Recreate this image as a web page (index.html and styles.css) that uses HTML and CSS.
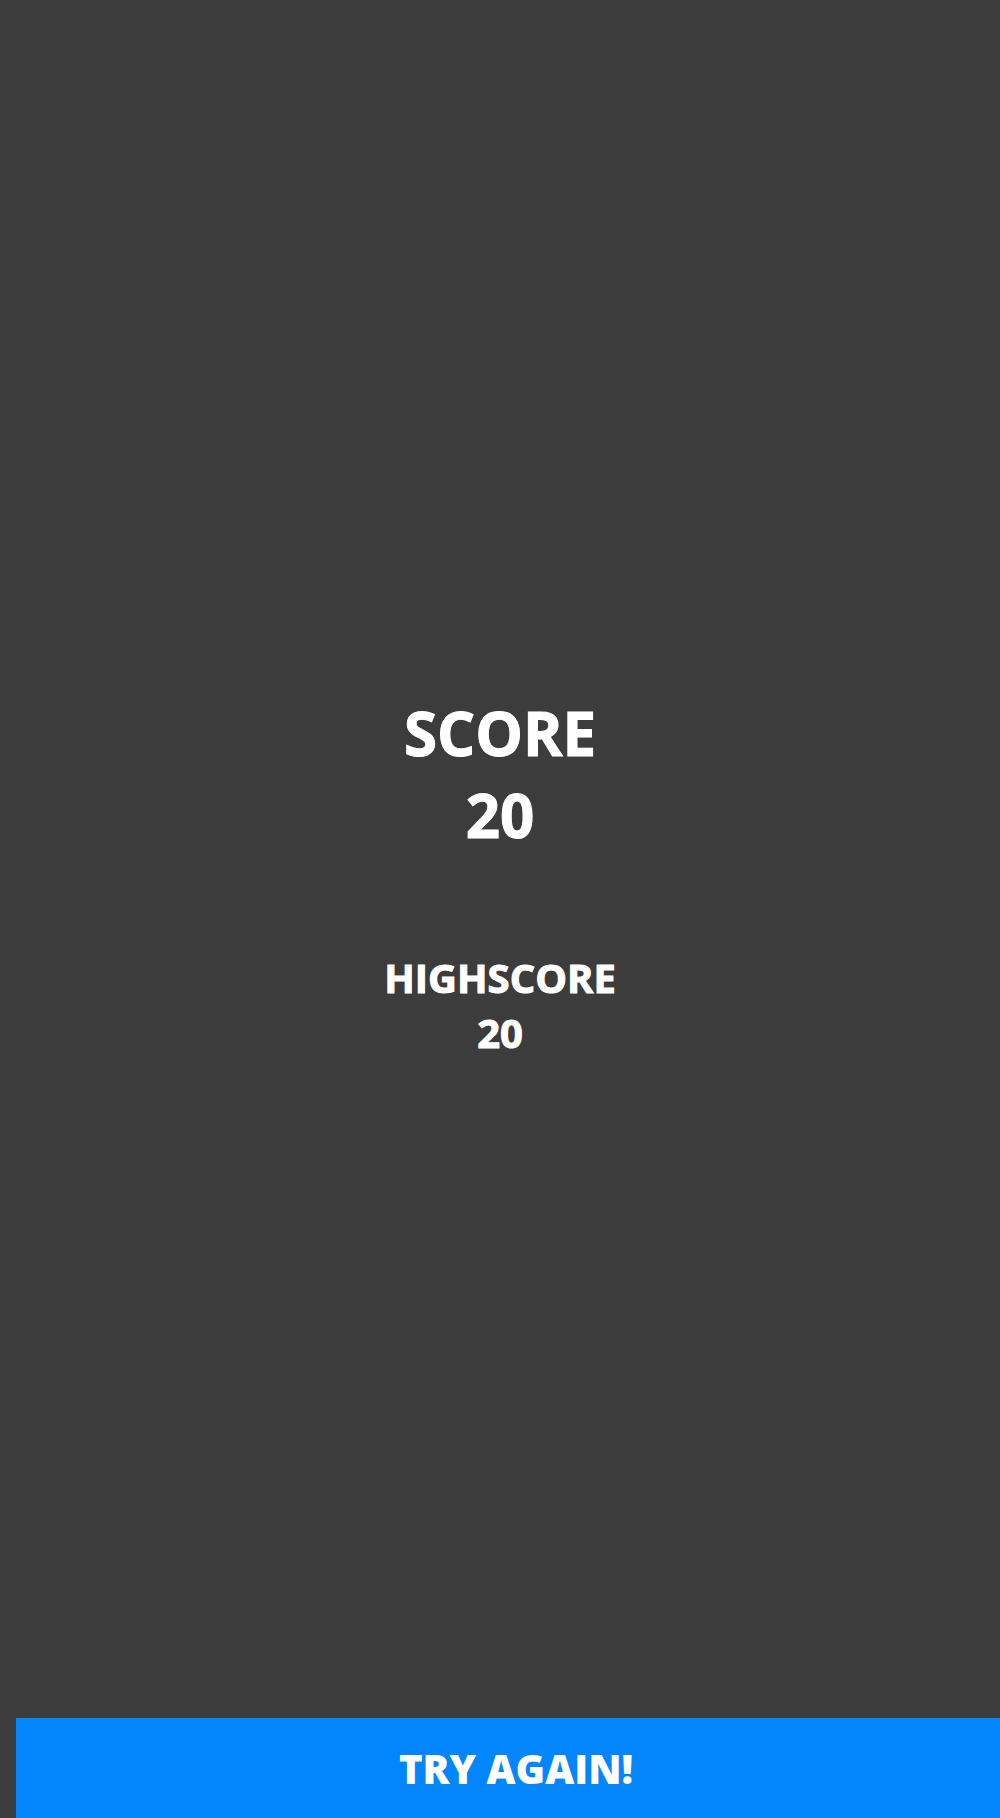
FILE: index.html
```
<!DOCTYPE html>
<html lang="en">
<head>
<meta charset="utf-8">
<meta name="viewport" content="width=device-width, initial-scale=1">
<title>Game over</title>
<link rel="stylesheet" href="styles.css">
</head>
<body>
<main class="results">
  <section class="score">
    <h1>SCORE</h1>
    <p>20</p>
  </section>
  <section class="highscore">
    <h2>HIGHSCORE</h2>
    <p>20</p>
  </section>
</main>
<button class="retry" type="button">TRY AGAIN!</button>
</body>
</html>
```

FILE: styles.css
```
* {
  box-sizing: border-box;
}

body {
  display: flex;
  flex-direction: column;
  min-height: 100vh;
  margin: 0;
  overflow-x: hidden;
  background: #3c3c3c;
  color: #fff;
  font-family: "Open Sans", sans-serif;
  font-weight: 700;
}

.results {
  display: flex;
  flex: 1;
  flex-direction: column;
  align-items: center;
  justify-content: center;
  gap: 94px;
  padding-top: 34px;
  text-align: center;
  -webkit-text-stroke: 1px currentColor;
}

h1,
h2,
p {
  margin: 0;
  font: inherit;
}

.score {
  font-size: 60px;
  line-height: 82px;
}

.highscore {
  font-size: 40px;
  line-height: 55px;
}

.retry {
  width: 100%;
  height: 100px;
  margin-left: 16px;
  padding: 0;
  border: 0;
  background: #0385fc;
  color: inherit;
  font-family: inherit;
  font-size: 40px;
  font-weight: 800;
  cursor: pointer;
}
```
